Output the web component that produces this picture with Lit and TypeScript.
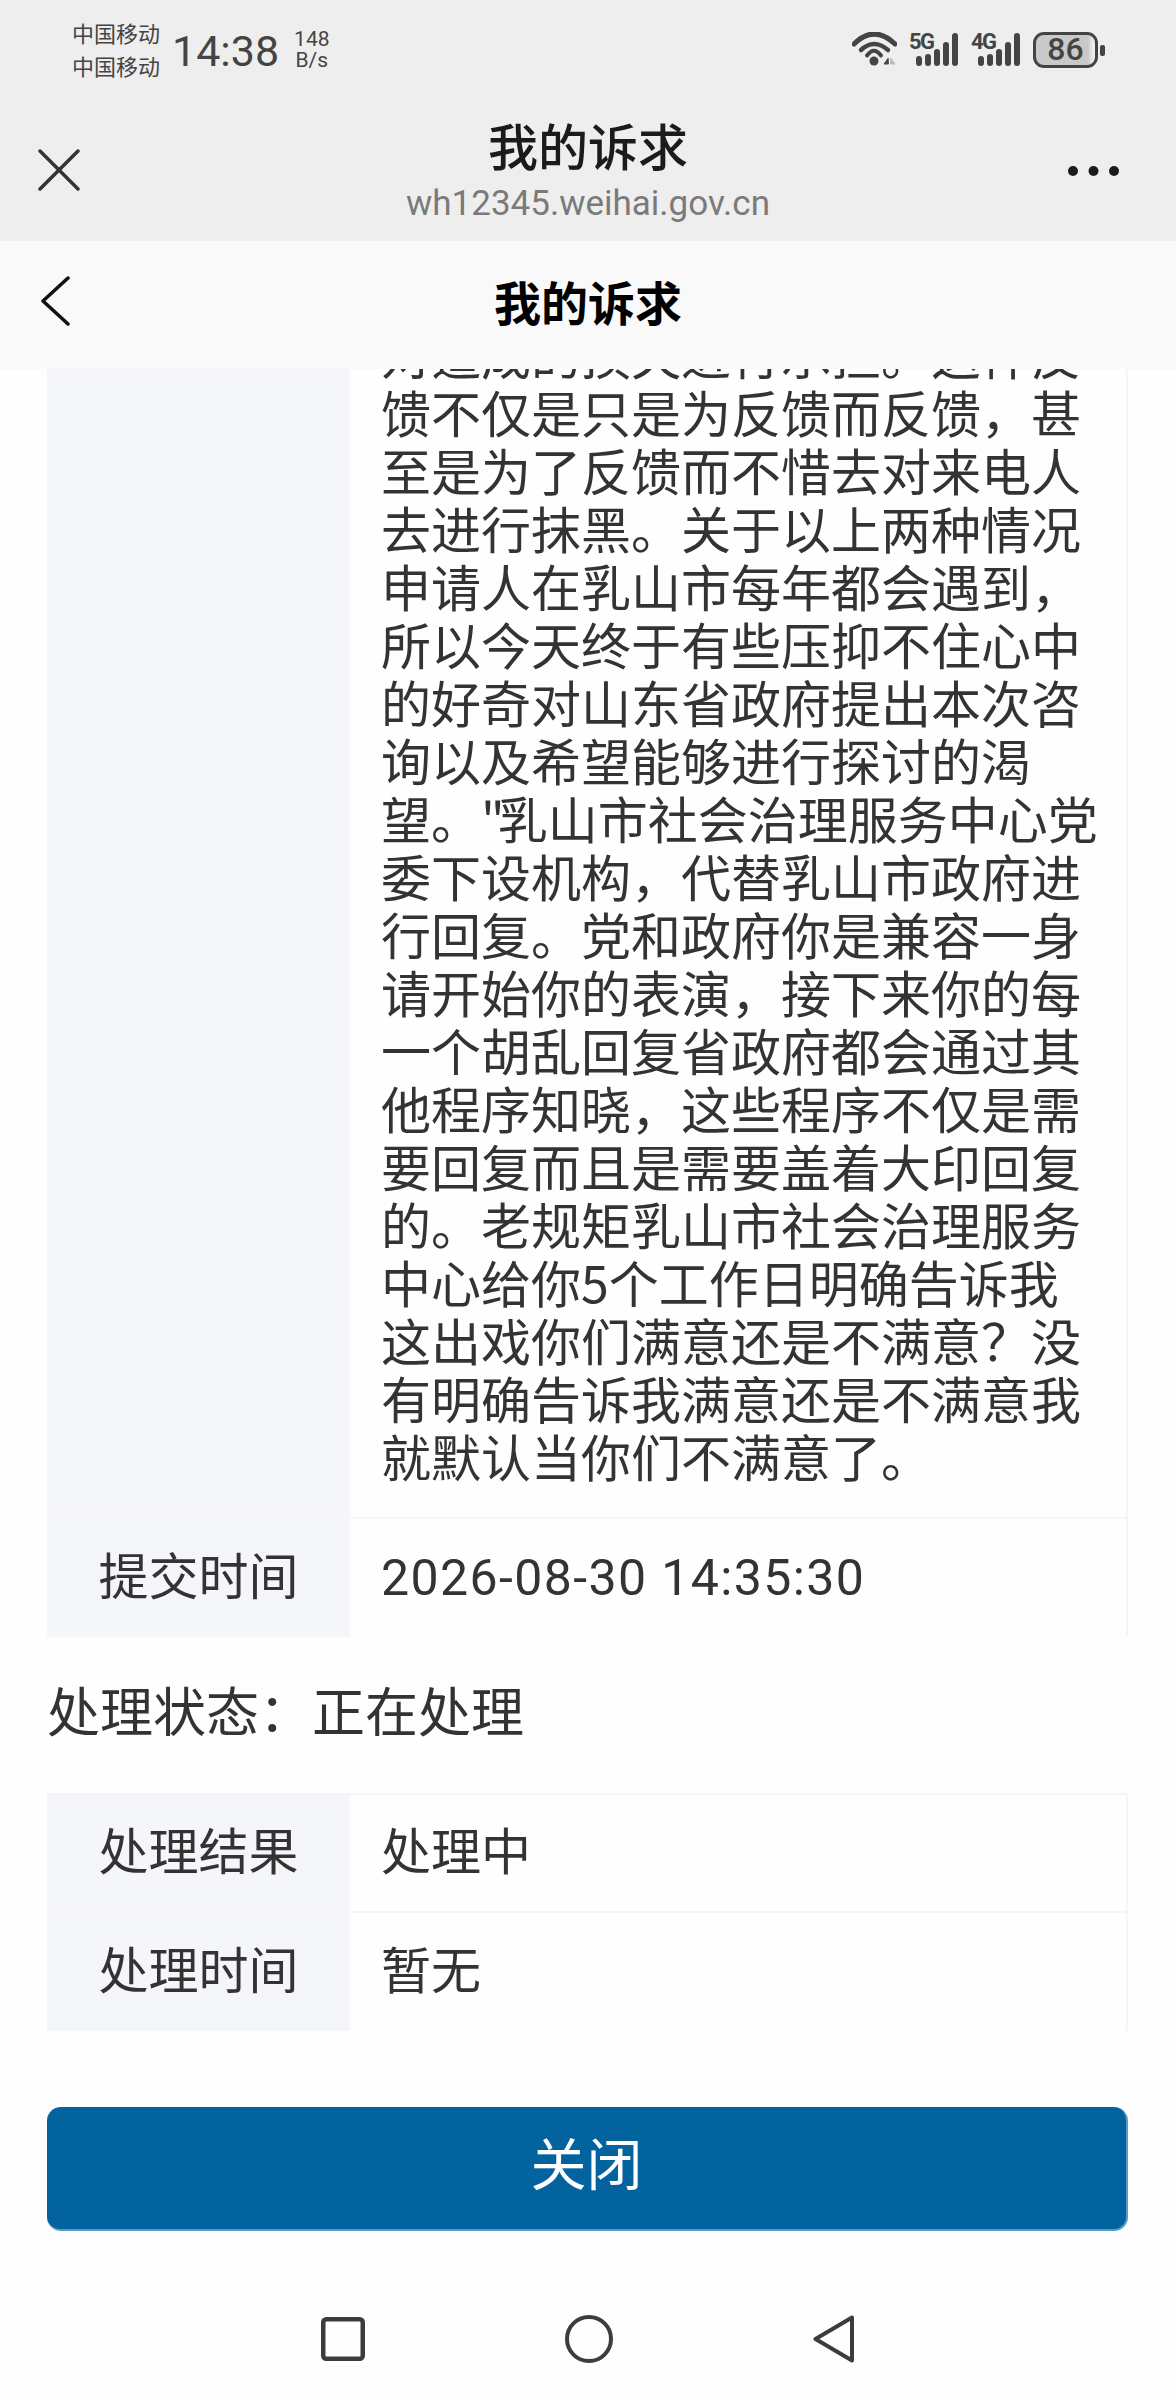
import { LitElement, html, css, svg } from 'lit';
import { customElement } from 'lit/decorators.js';

const APPEAL_LINES = [
  '对造成的损失进行承担。这件反',
  '馈不仅是只是为反馈而反馈，甚',
  '至是为了反馈而不惜去对来电人',
  '去进行抹黑。关于以上两种情况',
  '申请人在乳山市每年都会遇到，',
  '所以今天终于有些压抑不住心中',
  '的好奇对山东省政府提出本次咨',
  '询以及希望能够进行探讨的渴',
  html`望。<span class="appeal__quote">"</span>乳山市社会治理服务中心党`,
  '委下设机构，代替乳山市政府进',
  '行回复。党和政府你是兼容一身',
  '请开始你的表演，接下来你的每',
  '一个胡乱回复省政府都会通过其',
  '他程序知晓，这些程序不仅是需',
  '要回复而且是需要盖着大印回复',
  '的。老规矩乳山市社会治理服务',
  '中心给你5个工作日明确告诉我',
  '这出戏你们满意还是不满意？没',
  '有明确告诉我满意还是不满意我',
  '就默认当你们不满意了。',
];

const signalBars = svg`
  <path d="M10 26v4M19 24v6M28 19v11M37 12v18M46 3v27" />
`;

@customElement('app-root')
export class AppRoot extends LitElement {
  static styles = css`
    :host {
      display: block;
      min-height: 2400px;
      background: #fefefe;
      color: #333;
      font-family: 'Noto Sans CJK SC', sans-serif;
    }

    /* Browser chrome */
    .chrome {
      background: #eeeeee;
      height: 241px;
    }

    .status {
      display: flex;
      align-items: center;
      height: 100px;
      padding: 0 71px 0 72px;
      color: #444;
    }

    .status__carriers {
      font-size: 22px;
      line-height: 33px;
      margin: -3px 12px 0 0;
    }

    .status__time {
      font-family: Roboto, sans-serif;
      font-size: 43px;
      margin: 2px 15px 0 0;
    }

    .status__speed {
      font-family: Roboto, sans-serif;
      font-size: 21px;
      line-height: 21px;
      text-align: center;
    }

    .status__icons {
      display: flex;
      align-items: center;
      gap: 12px;
      margin-left: auto;
    }

    .signal {
      position: relative;
      width: 50px;
      height: 34px;
    }

    .signal svg {
      display: block;
      fill: none;
      stroke: #444;
      stroke-width: 6;
      stroke-linecap: round;
    }

    .signal__label {
      position: absolute;
      left: 0;
      top: -2px;
      font-family: Roboto, sans-serif;
      font-size: 22px;
      font-weight: 700;
      letter-spacing: -1.5px;
      line-height: 22px;
    }

    .battery {
      display: flex;
      align-items: center;
      gap: 2px;
    }

    .battery__body {
      width: 65px;
      height: 36px;
      box-sizing: border-box;
      border: 3.5px solid #444;
      border-radius: 11px;
      background: linear-gradient(90deg, #c9c9c9 88%, #eee 97%);
      font-family: Roboto, sans-serif;
      font-size: 32px;
      font-weight: 500;
      line-height: 29px;
      text-align: center;
    }

    .battery__nub {
      width: 5px;
      height: 11px;
      border-radius: 2px;
      background: #444;
    }

    .titlebar {
      display: grid;
      grid-template-columns: 1fr auto 1fr;
      align-items: center;
      height: 141px;
      padding: 0 38px;
    }

    .titlebar__close {
      margin-bottom: 2px;
    }

    .titlebar__center {
      text-align: center;
      padding-bottom: 2px;
    }

    .titlebar__title {
      color: #1b1b1b;
      font-size: 50px;
      font-weight: 500;
      line-height: 62px;
    }

    .titlebar__url {
      margin-top: 6px;
      color: #7a7a7a;
      font-family: Roboto, sans-serif;
      font-size: 35px;
      line-height: 46px;
    }

    .titlebar__more {
      justify-self: end;
      margin-right: 19px;
    }

    /* Page header */
    .pagebar {
      display: grid;
      grid-template-columns: 1fr auto 1fr;
      align-items: center;
      height: 128px;
      padding: 0 40px;
      background: #f9f9f9;
    }

    .pagebar__back {
      margin-bottom: 8px;
    }

    .pagebar__title {
      padding-bottom: 10px;
      color: #000;
      font-size: 47px;
      font-weight: 700;
    }

    .icon {
      display: block;
      fill: none;
      stroke-linecap: round;
      stroke-linejoin: round;
    }

    /* Scrolled page body */
    .viewport {
      overflow: hidden;
    }

    .content {
      margin-top: -70px;
      padding: 0 48px 0 47px;
    }

    .table {
      display: grid;
      grid-template-columns: 303px 1fr;
      border-right: 2px solid #f5f5f5;
    }

    .table--top {
      border-top: 2px solid #f5f5f5;
    }

    .cell-label,
    .cell-value {
      display: flex;
      align-items: center;
      box-sizing: border-box;
      height: 118px;
      padding-bottom: 11px;
      font-size: 50px;
    }

    .cell-label {
      justify-content: center;
      background: #f4f6fa;
    }

    .cell-value {
      padding-left: 31px;
    }

    .cell-value--date {
      padding-bottom: 0;
    }

    .row-line {
      border-bottom: 2px solid #f5f5f5;
    }

    .cell-blank {
      background: #f4f6fa;
    }

    .appeal {
      padding: 25px 0 33px 31px;
      font-size: 50px;
      line-height: 58px;
      white-space: nowrap;
    }

    .appeal__line {
      display: block;
    }

    .appeal__quote {
      letter-spacing: -7px;
    }

    .date {
      font-family: Roboto, 'Noto Sans CJK SC', sans-serif;
      letter-spacing: 1.4px;
    }

    .state {
      display: flex;
      align-items: center;
      box-sizing: border-box;
      height: 156px;
      padding-bottom: 12px;
      font-size: 53px;
    }

    .close {
      display: block;
      box-sizing: border-box;
      width: 100%;
      height: 124px;
      margin-top: 76px;
      padding: 0 0 16px;
      border: 0;
      border-right: 2px solid #5b9ac5;
      border-bottom: 2px solid #5b9ac5;
      border-radius: 14px;
      background: #03639e;
      color: #fff;
      font-family: inherit;
      font-size: 56px;
    }

    /* System navigation */
    .nav {
      display: flex;
      align-items: center;
      justify-content: center;
      gap: 200px;
      margin-top: 84px;
    }
  `;

  render() {
    return html`
      <div class="chrome">
        <div class="status">
          <div class="status__carriers">
            <div>中国移动</div>
            <div>中国移动</div>
          </div>
          <div class="status__time">14:38</div>
          <div class="status__speed">
            <div>148</div>
            <div>B/s</div>
          </div>
          <div class="status__icons">
            <svg class="icon" width="45" height="36" viewBox="0 0 45 36">
              <path d="M2 12Q22-8 43 12" stroke="#444" stroke-width="5" />
              <path d="M9 18Q22 6 36 18" stroke="#444" stroke-width="4.5" />
              <path d="M15 23.5Q22 14 29 23.5" stroke="#444" stroke-width="4" />
              <circle cx="22" cy="29" r="4.5" fill="#444" />
              <path d="M36 26.500l-4 5.500h4z" fill="#444" stroke="#444" stroke-width="1" />
              <path d="M39 26.500l4 5.500h-4z" fill="#bbb" stroke="#bbb" stroke-width="1" />
            </svg>
            <div class="signal">
              <svg width="50" height="34" viewBox="0 0 50 34">${signalBars}</svg>
              <span class="signal__label">5G</span>
            </div>
            <div class="signal">
              <svg width="50" height="34" viewBox="0 0 50 34">${signalBars}</svg>
              <span class="signal__label">4G</span>
            </div>
            <div class="battery">
              <div class="battery__body">86</div>
              <div class="battery__nub"></div>
            </div>
          </div>
        </div>
        <div class="titlebar">
          <svg class="icon titlebar__close" width="42" height="42" viewBox="0 0 42 42" stroke="#333" stroke-width="3.5">
            <path d="M2 2l38 38M40 2L2 40" />
          </svg>
          <div class="titlebar__center">
            <div class="titlebar__title">我的诉求</div>
            <div class="titlebar__url">wh12345.weihai.gov.cn</div>
          </div>
          <svg class="icon titlebar__more" width="51" height="10" viewBox="0 0 51 10">
            <circle cx="5" cy="5" r="5" fill="#1b1b1b" />
            <circle cx="25.500" cy="5" r="5" fill="#1b1b1b" />
            <circle cx="46" cy="5" r="5" fill="#1b1b1b" />
          </svg>
        </div>
      </div>
      <div class="pagebar">
        <svg class="icon pagebar__back" width="30" height="50" viewBox="0 0 30 50" stroke="#111" stroke-width="3.5">
          <path d="M28 2L3 25l25 23" />
        </svg>
        <div class="pagebar__title">我的诉求</div>
      </div>
      <div class="viewport">
        <div class="content">
          <div class="table">
            <div class="cell-blank row-line"></div>
            <div class="appeal row-line">
              ${APPEAL_LINES.map((line) => html`<span class="appeal__line">${line}</span>`)}
            </div>
            <div class="cell-label">提交时间</div>
            <div class="cell-value cell-value--date"><span class="date">2026-08-30 14:35:30</span></div>
          </div>
          <div class="state">
            <span>处理状态：</span>
            <span>正在处理</span>
          </div>
          <div class="table table--top">
            <div class="cell-label row-line">处理结果</div>
            <div class="cell-value row-line">处理中</div>
            <div class="cell-label">处理时间</div>
            <div class="cell-value">暂无</div>
          </div>
          <button class="close">关闭</button>
        </div>
      </div>
      <div class="nav">
        <svg class="icon" width="44" height="44" viewBox="0 0 44 44" stroke="#3c3c3c" stroke-width="4.500">
          <rect x="2.250" y="2.250" width="39.500" height="39.500" rx="3" />
        </svg>
        <svg class="icon" width="48" height="48" viewBox="0 0 48 48" stroke="#3c3c3c" stroke-width="4">
          <circle cx="24" cy="24" r="22" />
        </svg>
        <svg class="icon" width="42" height="48" viewBox="0 0 42 48" stroke="#3c3c3c" stroke-width="4">
          <path d="M39 2.500v43L2.500 24z" />
        </svg>
      </div>
    `;
  }
}
